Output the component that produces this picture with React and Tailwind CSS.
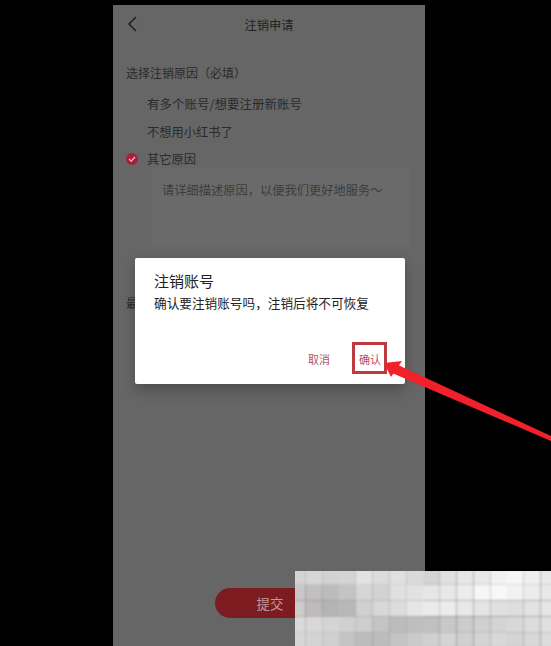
const cjk = { fontFamily: '"Noto Sans CJK SC", "Noto Sans", sans-serif' };

// rough colour patches of the mosaic over the corner
const mosaic = [
  ['#d4d4d4','#d6d6d6','#d2d2d2','#d4d4d4','#e2e2e2','#dcdcdc','#e0e0e0','#dadada','#d4d4d4','#e0e0e0','#e6e6e6','#e8e8e8','#f2f2f2','#f6f6f6','#efefef','#e8e8e8'],
  ['#c8c8c8','#c0c0c0','#bcbcbc','#c4c4c4','#d6d6d6','#d2d2d2','#e0e0e0','#e2e2e2','#e6e6e6','#e8e8e8','#ececec','#f6f6f6','#f8f8f8','#f2f2f2','#ececec','#e8e8e8'],
  ['#cccccc','#bcbcbc','#b4b4b4','#b8b8b8','#d0d0d0','#d8d8d8','#dcdcdc','#e6e6e6','#ebebeb','#ececec','#e8e8e8','#e4e4e4','#e0e0e0','#dedede','#e2e2e2','#e6e6e6'],
  ['#dadada','#d8d8d8','#d4d4d4','#d0d0d0','#cecece','#c4c4c4','#bcbcbc','#bebebe','#c0c0c0','#c8c8c8','#cccccc','#d0d0d0','#d4d4d4','#d8d8d8','#dcdcdc','#e0e0e0'],
  ['#d6d6d6','#d4d4d4','#d0d0d0','#c4c4c4','#bcbcbc','#bcbcbc','#c4c4c4','#cacaca','#d0d0d0','#d4d4d4','#d0d0d0','#d4d4d4','#d8d8d8','#d4d4d4','#d8d8d8','#dcdcdc'],
];

export default function App() {
  return (
    <div className="relative w-[551px] h-[646px] overflow-hidden bg-black text-[#2a2a2a]" style={cjk}>
      {/* dimmed phone page */}
      <div className="ml-[113px] mt-[5px] w-[312px] h-[641px] bg-[#666666] flex flex-col">
        <div className="relative h-[40px] flex items-center justify-center text-[12.25px] text-[#222222]">
          <svg className="absolute left-[13px] top-[10px]" width="12" height="18" viewBox="0 0 12 18" fill="none">
            <path d="M10 2 L3 9 L10 16" stroke="#222222" strokeWidth="1.6" />
          </svg>
          注销申请
        </div>
        <div className="mt-[20px] pl-[13px] text-[12px] leading-[16px]">选择注销原因（必填）</div>
        <div className="mt-[15px] pl-[13px] flex items-center gap-[9px] text-[12.5px] leading-[16px]">
          <span className="w-[12px] h-[12px] rounded-full border border-[#6b6b6b]" />
          有多个账号/想要注册新账号
        </div>
        <div className="mt-[12px] pl-[13px] flex items-center gap-[9px] text-[12.25px] leading-[16px]">
          <span className="w-[12px] h-[12px] rounded-full border border-[#6b6b6b]" />
          不想用小红书了
        </div>
        <div className="mt-[11px] pl-[13px] flex items-center gap-[9px] text-[12.25px] leading-[16px]">
          <svg width="12" height="12" viewBox="0 0 12 12">
            <circle cx="6" cy="6" r="6" fill="#a81f3c" />
            <path d="M3 6 L5.2 8.2 L9 4" stroke="#e8c4c8" strokeWidth="1.2" fill="none" />
          </svg>
          其它原因
        </div>
        <div className="mt-[1px] ml-[39px] w-[258px] h-[79px] rounded-[4px] bg-[#6a6a6a] pt-[14px] pl-[10px] text-[12.25px] leading-[16px] text-[#3c3c3c] whitespace-nowrap">
          请详细描述原因，以便我们更好地服务～
        </div>
        <div className="mt-[48px] pl-[13px] text-[12px] leading-[16px]">最</div>
        <button className="mt-auto mb-[28px] ml-[102px] w-[110px] h-[30px] rounded-full bg-[#7c1c20] text-[13.5px] text-[#c09a9a]">
          提交
        </button>
      </div>

      {/* dialog */}
      <div className="absolute left-[135px] top-[258px] w-[270px] h-[126px] bg-white rounded-[2px] shadow-[0_6px_14px_rgba(0,0,0,0.25)] flex flex-col pl-[19px] pr-[24px]">
        <div className="mt-[13px] text-[15px] leading-[20px] text-[#222222]">注销账号</div>
        <div className="mt-[3px] text-[12.65px] leading-[18px] text-[#222222] whitespace-nowrap">确认要注销账号吗，注销后将不可恢复</div>
        <div className="mt-auto mb-[17px] flex justify-end gap-[29px] text-[11px] leading-[16px] text-[#b8505f]">
          <span>取消</span>
          <span>确认</span>
        </div>
      </div>

      {/* annotation */}
      <div className="absolute left-[352px] top-[342px] w-[35px] h-[32px] border-[3px] border-[#bc3a40]" />
      <svg className="absolute left-0 top-0" width="551" height="646" viewBox="0 0 551 646" fill="none">
        <polygon points="551,436 551,441 392,373 396,364" fill="#f2202a" />
        <polygon points="384,363 402,361 391,377" fill="#f2202a" />
      </svg>

      {/* mosaic */}
      <div className="absolute left-[295px] top-[571px] w-[256px] h-[75px] overflow-hidden">
        <div className="w-full h-full grid grid-cols-[repeat(16,1fr)] grid-rows-5 blur-[1px] scale-105">
          {mosaic.flat().map((c, i) => (
            <div key={i} style={{ backgroundColor: c }} />
          ))}
        </div>
      </div>
    </div>
  );
}
